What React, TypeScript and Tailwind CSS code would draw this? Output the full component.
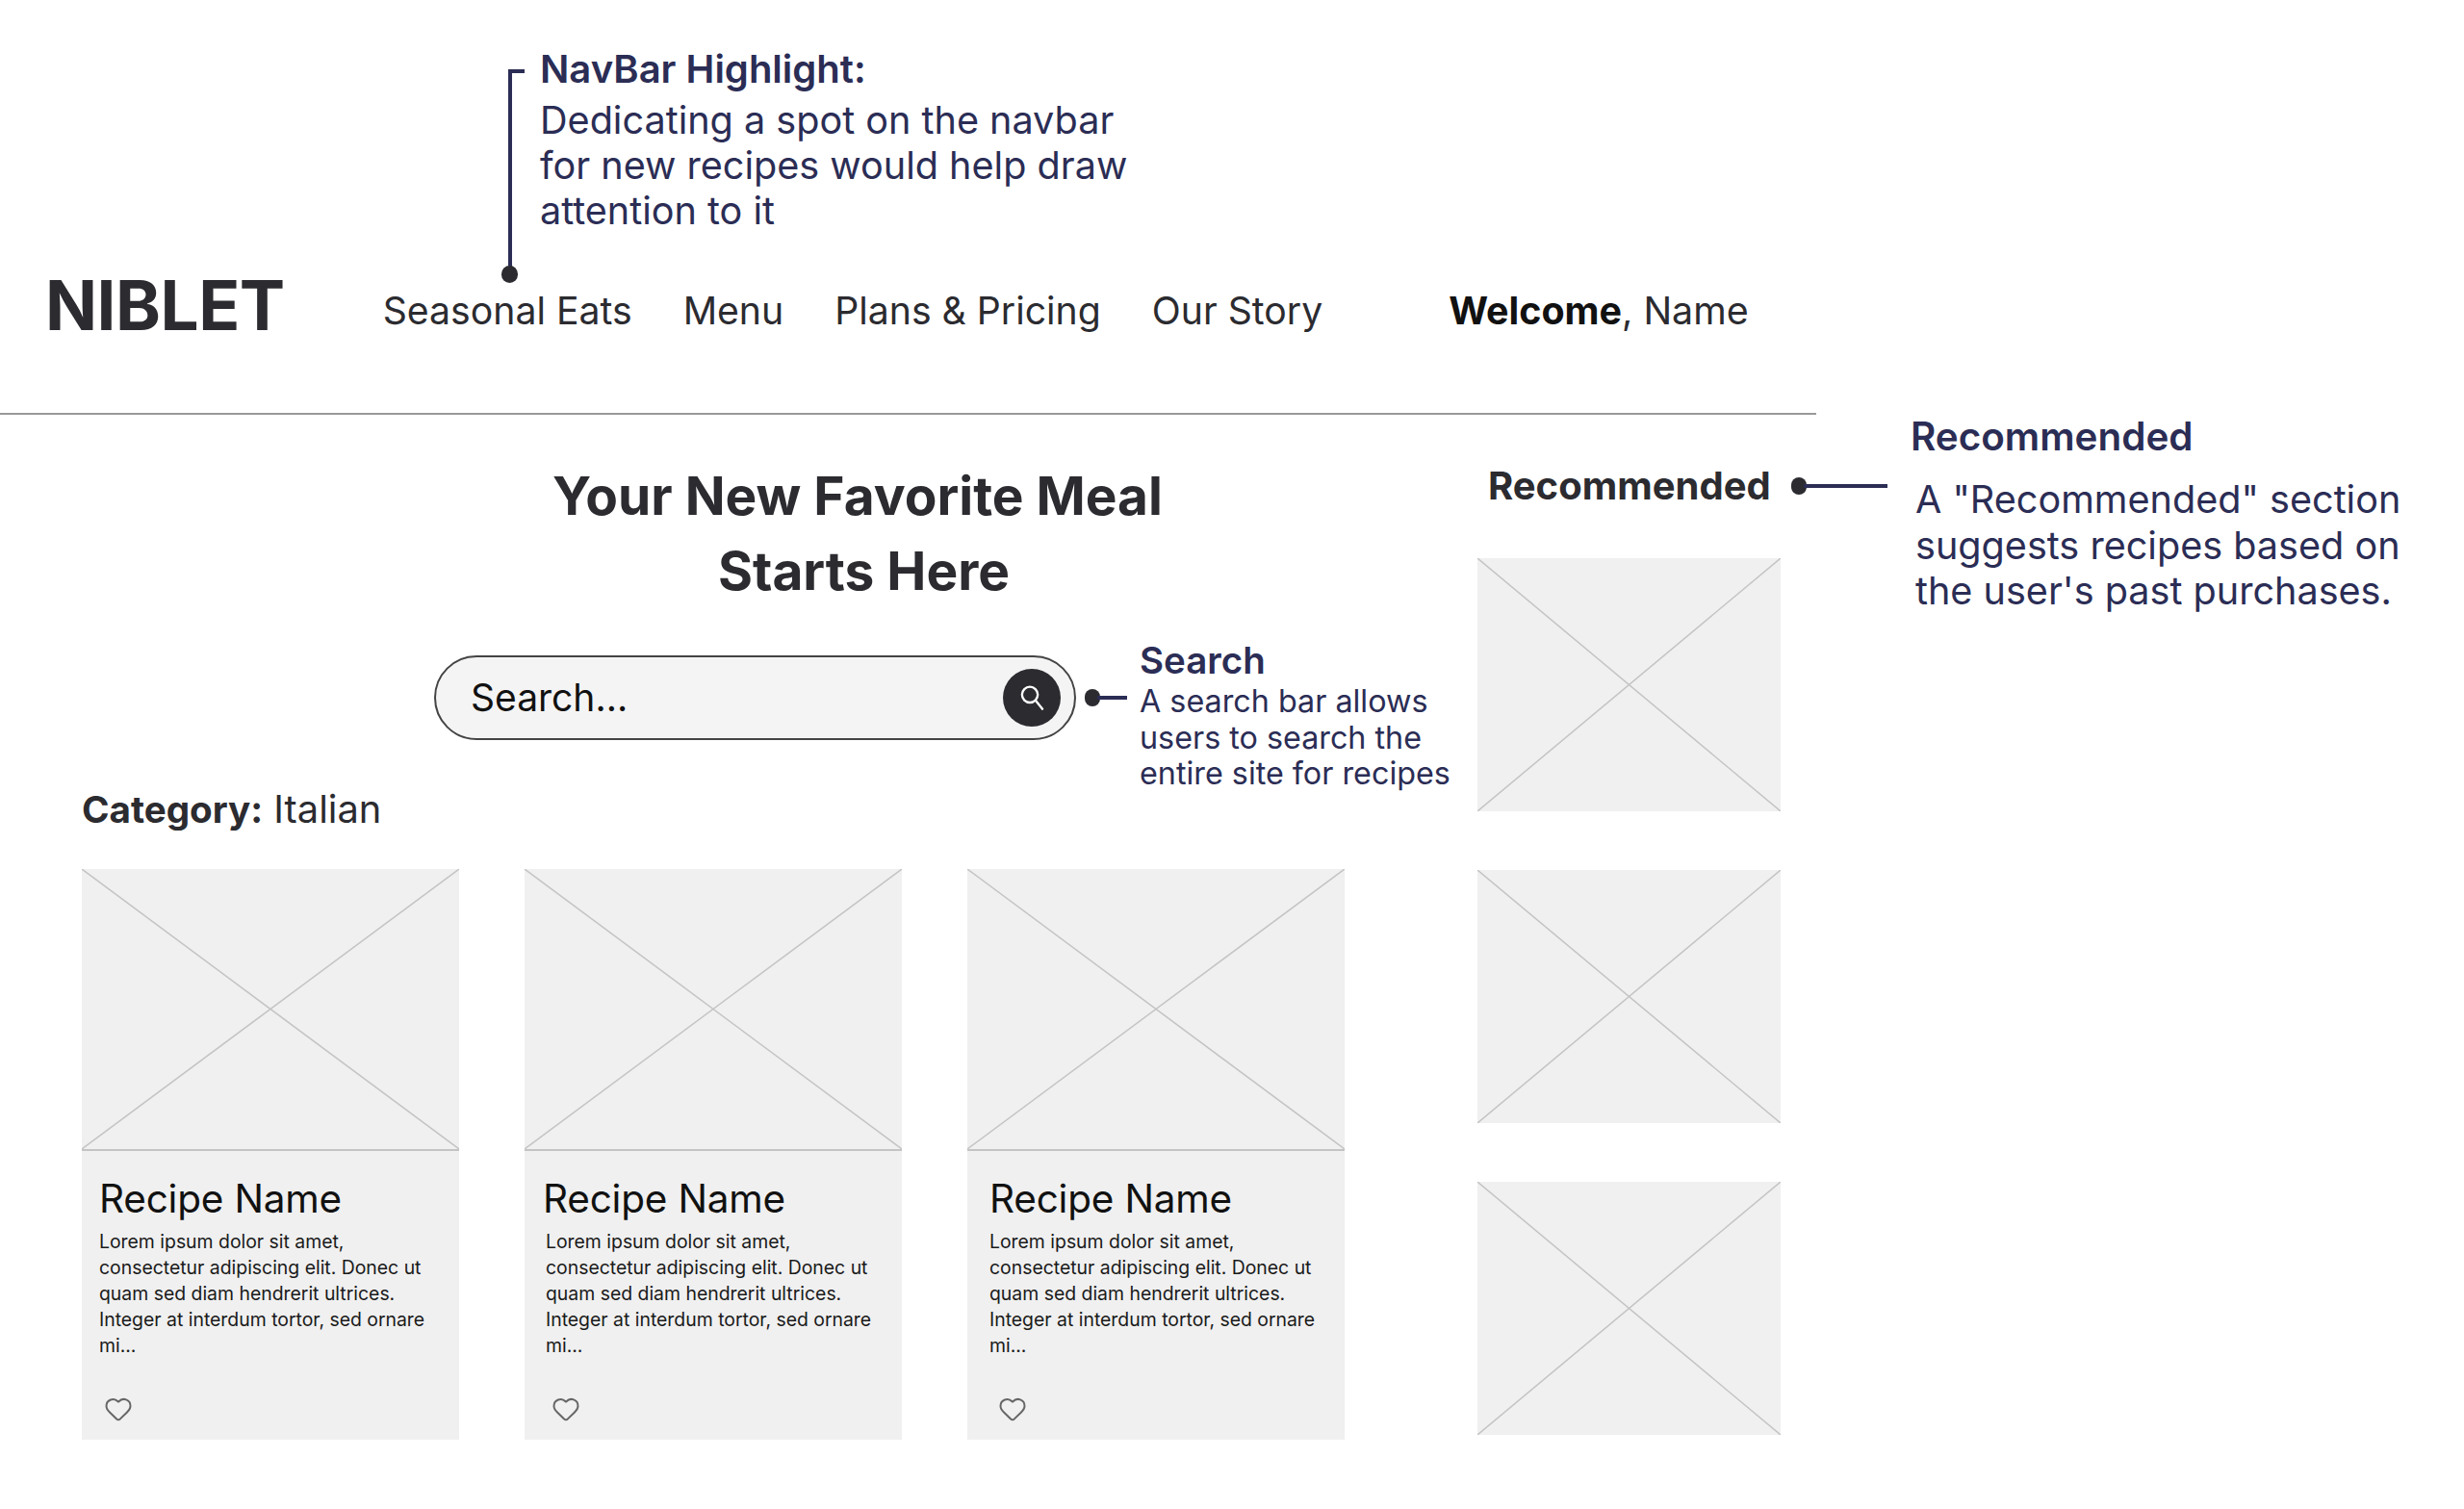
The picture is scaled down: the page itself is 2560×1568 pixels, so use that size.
import { Heart } from 'lucide-react';

const navLinks = ['Seasonal Eats', 'Menu', 'Plans & Pricing', 'Our Story'];
const loremText =
  'Lorem ipsum dolor sit amet, consectetur adipiscing elit. Donec ut quam sed diam hendrerit ultrices. Integer at interdum tortor, sed ornare mi...';

function Placeholder({ className }: { className: string }) {
  return (
    <div className={`relative bg-[#f0f0f0] ${className}`}>
      <svg className="absolute inset-0 h-full w-full" viewBox="0 0 100 100" preserveAspectRatio="none">
        <path d="M0 0 100 100M100 0 0 100" stroke="#c4c4c4" strokeWidth="1.5" vectorEffect="non-scaling-stroke" fill="none" />
      </svg>
    </div>
  );
}

function RecipeCard({ nameOffset, textOffset, heartOffset }: { nameOffset: string; textOffset: string; heartOffset: string }) {
  return (
    <div className="flex h-[593px] w-[392px] flex-col bg-[#f0f0f0]">
      <Placeholder className="h-[293px] w-full border-b-2 border-[#c4c4c4]" />
      <h3 className={`mt-[26px] text-[40.5px] leading-[48px] font-normal tracking-[-0.2px] text-[#111] ${nameOffset}`}>Recipe Name</h3>
      <p className={`mt-[7px] w-[350px] text-[19.4px] leading-[27px] text-[#1a1a1a] ${textOffset}`}>{loremText}</p>
      <Heart className={`mt-[37px] text-[#666] ${heartOffset}`} size={30} strokeWidth={1.6} />
    </div>
  );
}

export default function App() {
  return (
    <div className="relative h-[1568px] w-[2560px] overflow-hidden bg-white font-['Inter',sans-serif] text-[#2b2b30]">
      {/* Page */}
      <header className="flex h-[431px] w-[1887px] items-start border-b-2 border-[#999] pt-[272px] pl-[47px]">
        <div className="text-[71px] leading-[90px] font-bold tracking-[-0.5px]">NIBLET</div>
        <nav className="mt-[26px] ml-[102px] flex gap-[53px] text-[39.2px] leading-[50px]">
          {navLinks.map((link) => (
            <a key={link}>{link}</a>
          ))}
        </nav>
        <div className="mt-[26px] ml-[131px] text-[39.4px] leading-[50px]">
          <b className="font-bold text-[#111]">Welcome</b>, Name
        </div>
      </header>

      <main className="flex items-start">
        <section className="w-[1535px] pl-[85px]">
          <div className="pt-[45px] pl-[162px] text-center text-[55px] leading-[78px] font-bold">
            <h1>
              Your New Favorite Meal
              <br />
              <span className="ml-[13px]">Starts Here</span>
            </h1>
          </div>
          <div className="mt-[49px] ml-[366px] flex h-[88px] w-[667px] items-center justify-between rounded-full border-2 border-[#444] bg-[#f4f4f4] pr-[14px] pl-[36px]">
            <span className="text-[39px] text-[#111]">Search...</span>
            <span className="flex h-[60px] w-[60px] items-center justify-center rounded-full bg-[#2b2b30]">
              <svg width="28" height="28" viewBox="0 0 24 24" fill="none" stroke="white" strokeWidth="2" strokeLinecap="round">
                <circle cx="10.3" cy="9.3" r="7" />
                <path d="M15.5 14.5 21.5 22" />
              </svg>
            </span>
          </div>
          <div className="mt-[47px] text-[39.8px] leading-[50px]">
            <b className="text-[38.6px] font-bold">Category:</b> Italian
          </div>
          <div className="mt-[37px] flex gap-[68px]">
            <RecipeCard nameOffset="ml-[18px]" textOffset="ml-[18px]" heartOffset="ml-[23px]" />
            <RecipeCard nameOffset="ml-[19px]" textOffset="ml-[22px]" heartOffset="ml-[28px]" />
            <RecipeCard nameOffset="ml-[23px]" textOffset="ml-[23px]" heartOffset="ml-[32px]" />
          </div>
        </section>

        <aside className="w-[315px]">
          <h2 className="mt-[49px] ml-[11px] text-[40px] leading-[50px] font-bold whitespace-nowrap">Recommended</h2>
          <div className="mt-[50px] flex flex-col gap-[61px]">
            <Placeholder className="h-[263px]" />
            <Placeholder className="h-[263px]" />
            <Placeholder className="h-[263px]" />
          </div>
        </aside>
      </main>

      {/* Annotations */}
      <div className="absolute top-[72px] left-[528px] h-[212px] w-[17px] border-t-[4px] border-l-[4px] border-[#2b2d55]" />
      <div className="absolute top-[276px] left-[521px] h-[18px] w-[17px] rounded-full bg-[#2b2b30]" />
      <div className="absolute top-[48px] left-[561px] w-[680px] text-[39.6px] leading-[47px] text-[#2b2d55]">
        <div className="text-[40px] font-semibold">NavBar Highlight:</div>
        <div className="mt-[7px]">
          Dedicating a spot on the navbar
          <br />
          for new recipes would help draw
          <br />
          attention to it
        </div>
      </div>

      <div className="absolute top-[716px] left-[1127px] h-[18px] w-[16px] rounded-full bg-[#2b2b30]" />
      <div className="absolute top-[723px] left-[1140px] h-[4px] w-[31px] bg-[#2b2d55]" />
      <div className="absolute top-[664px] left-[1184px] w-[345px] text-[#2b2d55]">
        <div className="text-[38.5px] leading-[44px] font-semibold">Search</div>
        <div className="mt-[2px] text-[32.3px] leading-[37.5px]">
          A search bar allows
          <br />
          users to search the
          <br />
          entire site for recipes
        </div>
      </div>

      <div className="absolute top-[496px] left-[1861px] h-[18px] w-[16px] rounded-full bg-[#2b2b30]" />
      <div className="absolute top-[503px] left-[1874px] h-[4px] w-[87px] bg-[#2b2d55]" />
      <div className="absolute top-[430px] left-[1985px] w-[570px] text-[#2b2d55]">
        <div className="text-[40.4px] leading-[48px] font-semibold">Recommended</div>
        <div className="mt-[18px] ml-[5px] text-[39.6px] leading-[47.5px]">
          A "Recommended" section
          <br />
          suggests recipes based on
          <br />
          the user's past purchases.
        </div>
      </div>
    </div>
  );
}
